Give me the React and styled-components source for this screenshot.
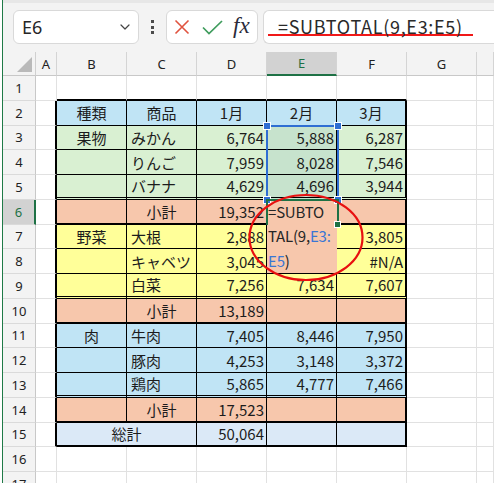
import React from 'react';
import styled, { createGlobalStyle } from 'styled-components';
import { ChevronDown } from 'lucide-react';

const GlobalStyle = createGlobalStyle`
  html, body { margin: 0; padding: 0; overflow: hidden; background: #fff; }
  body { font-family: "Noto Sans CJK JP", "Noto Sans", sans-serif; }
`;

const Frame = styled.div`
  margin-left: 2px;
  border-left: 1px solid #1f7a47;
  width: 491px;
  height: 483px;
  overflow: hidden;
`;

const TopBar = styled.div`
  height: 52px;
  box-sizing: border-box;
  background: #f3f3f3;
  border-top: 3px solid #e7e7e7;
  display: flex;
  align-items: flex-start;
  padding: 7px 0 0 10px;
`;

const NameBox = styled.div`
  width: 126px;
  height: 34px;
  box-sizing: border-box;
  background: #fff;
  border: 1px solid #d9d9d9;
  border-radius: 6px;
  display: flex;
  align-items: center;
  justify-content: space-between;
  padding: 0 5px 0 8px;
  font-family: "Noto Sans", sans-serif;
  font-size: 18px;
  color: #262626;
`;

const Dots = styled.div`
  width: 27px;
  height: 34px;
  display: flex;
  flex-direction: column;
  align-items: center;
  justify-content: center;
  gap: 2.5px;
`;

const Dot = styled.span`
  width: 3px;
  height: 3px;
  background: #4a4a4a;
`;

const ActionBox = styled.div`
  width: 92px;
  height: 34px;
  box-sizing: border-box;
  background: #fff;
  border: 1px solid #d9d9d9;
  border-radius: 6px;
  display: flex;
  align-items: center;
  padding-left: 7px;
`;

const Fx = styled.span`
  margin-left: 10px;
  font-family: "Liberation Serif", "DejaVu Serif", serif;
  font-style: italic;
  font-size: 23px;
  color: #2a2a3a;
  line-height: 1;
  padding-bottom: 3px;
`;

const FormulaBox = styled.div`
  flex: 1;
  margin-left: 5px;
  height: 34px;
  box-sizing: border-box;
  background: #fff;
  border: 1px solid #d9d9d9;
  border-right: none;
  border-radius: 6px 0 0 6px;
  display: flex;
  align-items: center;
  padding-left: 4px;
`;

const FormulaText = styled.span`
  font-family: "Noto Sans CJK JP", "Noto Sans", sans-serif;
  font-size: 18px;
  letter-spacing: 0.7px;
  line-height: 16px;
  color: #2a2a2a;
  padding: 0 10px;
  border-bottom: 2px solid #f01818;
`;

const COLS = '33px 21px 70px 70px 70px 70px 70px 70px 1fr';
const ROWS = '24px repeat(17, 24.75px)';

const Sheet = styled.div`
  position: relative;
`;

const Grid = styled.div`
  display: grid;
  grid-template-columns: ${COLS};
  grid-template-rows: ${ROWS};
`;

const Corner = styled.div`
  box-sizing: border-box;
  background: #f3f3f3;
  border-right: 1px solid #d0d0d0;
  border-bottom: 1px solid #c8c8c8;
  display: flex;
  align-items: flex-end;
  justify-content: flex-end;
  padding: 0 3px 3px 0;
`;

const Tri = styled.span`
  width: 0;
  height: 0;
  border-left: 15px solid transparent;
  border-bottom: 15px solid #b9b9b9;
`;

const ColHead = styled.div`
  box-sizing: border-box;
  background: ${p => (p.$active ? '#d2d2d2' : '#f3f3f3')};
  border-right: 1px solid #d4d4d4;
  border-bottom: ${p => (p.$active ? '2px solid #1e7145' : '1px solid #c8c8c8')};
  color: ${p => (p.$active ? '#1e7145' : '#222')};
  font-family: "Noto Sans", sans-serif;
  font-size: 13px;
  display: flex;
  align-items: center;
  justify-content: center;
`;

const RowHead = styled.div`
  box-sizing: border-box;
  background: ${p => (p.$active ? '#d2d2d2' : '#f3f3f3')};
  border-right: ${p => (p.$active ? '2px solid #1e7145' : '1px solid #c8c8c8')};
  border-bottom: 1px solid #dadada;
  color: ${p => (p.$active ? '#1e7145' : '#222')};
  font-family: "Noto Sans", sans-serif;
  font-size: 13px;
  display: flex;
  align-items: center;
  justify-content: center;
`;

const Cell = styled.div`
  box-sizing: border-box;
  grid-column: span ${p => p.$span || 1};
  background: ${p => p.$bg || '#fff'};
  border-right: ${p => p.$br || '1px solid #e1e1e1'};
  border-bottom: ${p => p.$bb || '1px solid #e1e1e1'};
  display: flex;
  align-items: center;
  justify-content: ${p => (p.$align === 'center' ? 'center' : p.$align === 'right' ? 'flex-end' : 'flex-start')};
  padding: 0 ${p => (p.$align === 'right' ? '2px' : '4px')};
  font-size: 15px;
  color: #1c1c1c;
  white-space: nowrap;
  overflow: hidden;
`;

const Overlay = styled.div`
  position: absolute;
  inset: 0;
  display: grid;
  grid-template-columns: ${COLS};
  grid-template-rows: ${ROWS};
  pointer-events: none;
`;

const SelectionBox = styled.div`
  grid-column: 6;
  grid-row: 4 / 7;
  position: relative;
  margin: -1px -2px -1px -1px;
  border: 2px solid #2f6ed3;
`;

const Handle = styled.span`
  position: absolute;
  width: 6px;
  height: 6px;
  background: #2f6ed3;
  border: 1px solid #fff;
  ${p => (p.$top ? 'top: -5px;' : 'bottom: -5px;')}
  ${p => (p.$left ? 'left: -5px;' : 'right: -5px;')}
`;

const Editor = styled.div`
  grid-column: 6;
  grid-row: 7 / 10;
  height: 73px;
  background: #f7c7ac;
  padding: 0 1px;
  font-size: 15px;
  letter-spacing: -0.2px;
  line-height: 24.5px;
  color: #262626;
  white-space: nowrap;
`;

const Ref = styled.span`
  color: #3a76d4;
`;

const ActiveCell = styled.div`
  grid-column: 6;
  grid-row: 7;
  position: relative;
  margin: -1px -2px 0 -1px;
  border: 2px solid #1e7145;
  border-bottom: none;
`;

const FillHandle = styled.span`
  position: absolute;
  right: -4px;
  bottom: -3px;
  width: 5px;
  height: 5px;
  background: #1e7145;
  border: 1px solid #fff;
`;

const Ellipse = styled.svg`
  position: absolute;
  left: 244px;
  top: 141px;
  overflow: visible;
`;

const BLUE = '#c0e4f5';
const GREEN = '#d9f0d2';
const SALMON = '#f7c7ac';
const YELLOW = '#ffff99';
const TOTAL = '#dbe9f7';
const SEL = '#c7e3cd';

const THIN = '1px solid #000';
const DOUBLE = '3px double #000';
const THICK = '2px solid #000';

const rows = [
  { bg: BLUE, bb: THIN, b: '種類', c: '商品', cAlign: 'center', d: '1月', e: '2月', f: '3月', head: true },
  { bg: GREEN, bb: THIN, b: '果物', c: 'みかん', d: '6,764', e: '5,888', f: '6,287', sel: true },
  { bg: GREEN, bb: THIN, b: '', c: 'りんご', d: '7,959', e: '8,028', f: '7,546', sel: true },
  { bg: GREEN, bb: DOUBLE, b: '', c: 'バナナ', d: '4,629', e: '4,696', f: '3,944', sel: true },
  { bg: SALMON, bb: THICK, b: '', c: '小計', cAlign: 'center', d: '19,352', e: '', f: '' },
  { bg: YELLOW, bb: THIN, b: '野菜', c: '大根', d: '2,888', e: '', f: '3,805' },
  { bg: YELLOW, bb: THIN, b: '', c: 'キャベツ', d: '3,045', e: '', f: '#N/A' },
  { bg: YELLOW, bb: DOUBLE, b: '', c: '白菜', d: '7,256', e: '7,634', f: '7,607' },
  { bg: SALMON, bb: THICK, b: '', c: '小計', cAlign: 'center', d: '13,189', e: '', f: '' },
  { bg: BLUE, bb: THIN, b: '肉', c: '牛肉', d: '7,405', e: '8,446', f: '7,950' },
  { bg: BLUE, bb: THIN, b: '', c: '豚肉', d: '4,253', e: '3,148', f: '3,372' },
  { bg: BLUE, bb: DOUBLE, b: '', c: '鶏肉', d: '5,865', e: '4,777', f: '7,466' },
  { bg: SALMON, bb: THICK, b: '', c: '小計', cAlign: 'center', d: '17,523', e: '', f: '' },
  { bg: TOTAL, bb: THICK, total: '総計', d: '50,064', e: '', f: '' },
];

const LETTERS = ['A', 'B', 'C', 'D', 'E', 'F', 'G', ''];

function XIcon() {
  return (
    <svg width="16" height="16" viewBox="0 0 16 16">
      <path d="M1.5 1.5 L14.5 14.5 M14.5 1.5 L1.5 14.5" stroke="#e0533f" strokeWidth="1.6" fill="none" />
    </svg>
  );
}

function CheckIcon() {
  return (
    <svg width="21" height="15" viewBox="0 0 21 15" style={{ marginLeft: 12 }}>
      <path d="M1 7.5 L7 13.5 L20 1" stroke="#3f9c5d" strokeWidth="1.7" fill="none" />
    </svg>
  );
}

export default function App() {
  const cells = [];
  cells.push(
    <Corner key="corner">
      <Tri />
    </Corner>
  );
  LETTERS.forEach((l, i) => cells.push(<ColHead key={'h' + i} $active={l === 'E'}>{l}</ColHead>));

  for (let r = 1; r <= 17; r++) {
    cells.push(<RowHead key={'r' + r} $active={r === 6}>{r}</RowHead>);
    const inTable = r >= 2 && r <= 15;
    cells.push(<Cell key={'a' + r} $br={inTable ? THICK : undefined} />);
    if (r === 1) {
      ['b', 'c', 'd', 'e', 'f'].forEach(k => cells.push(<Cell key={k + r} $bb={THICK} />));
    } else if (inTable) {
      const row = rows[r - 2];
      if (row.total) {
        cells.push(
          <Cell key={'bc' + r} $span={2} $bg={row.bg} $bb={row.bb} $br={THIN} $align="center">
            {row.total}
          </Cell>
        );
      } else {
        cells.push(
          <Cell key={'b' + r} $bg={row.bg} $bb={row.bb} $br={THIN} $align="center">
            {row.b}
          </Cell>
        );
        cells.push(
          <Cell key={'c' + r} $bg={row.bg} $bb={row.bb} $br={THIN} $align={row.cAlign || 'left'}>
            {row.c}
          </Cell>
        );
      }
      const numAlign = row.head ? 'center' : 'right';
      cells.push(
        <Cell key={'d' + r} $bg={row.bg} $bb={row.bb} $br={THIN} $align={numAlign}>
          {row.d}
        </Cell>
      );
      cells.push(
        <Cell key={'e' + r} $bg={row.sel ? SEL : row.bg} $bb={row.bb} $br={THIN} $align={numAlign}>
          {row.e}
        </Cell>
      );
      cells.push(
        <Cell key={'f' + r} $bg={row.bg} $bb={row.bb} $br={THICK} $align={numAlign}>
          {row.f}
        </Cell>
      );
    } else {
      ['b', 'c', 'd', 'e', 'f'].forEach(k => cells.push(<Cell key={k + r} />));
    }
    cells.push(<Cell key={'g' + r} />);
    cells.push(<Cell key={'hh' + r} />);
  }

  return (
    <>
      <GlobalStyle />
      <Frame>
        <TopBar>
          <NameBox>
            E6
            <ChevronDown size={16} color="#444" strokeWidth={1.8} />
          </NameBox>
          <Dots>
            <Dot />
            <Dot />
            <Dot />
          </Dots>
          <ActionBox>
            <XIcon />
            <CheckIcon />
            <Fx>fx</Fx>
          </ActionBox>
          <FormulaBox>
            <FormulaText>=SUBTOTAL(9,E3:E5)</FormulaText>
          </FormulaBox>
        </TopBar>
        <Sheet>
          <Grid>{cells}</Grid>
          <Overlay>
            <SelectionBox>
              <Handle $top $left />
              <Handle $top />
              <Handle $left />
              <Handle />
            </SelectionBox>
            <Editor>
              =SUBTO
              <br />
              TAL(9,<Ref>E3:</Ref>
              <br />
              <Ref>E5</Ref>)
            </Editor>
            <ActiveCell>
              <FillHandle />
            </ActiveCell>
          </Overlay>
          <Ellipse width="118" height="89" viewBox="0 0 118 89">
            <ellipse cx="59" cy="44.5" rx="56.5" ry="42.5" fill="none" stroke="#e81010" strokeWidth="2.2" />
          </Ellipse>
        </Sheet>
      </Frame>
    </>
  );
}
